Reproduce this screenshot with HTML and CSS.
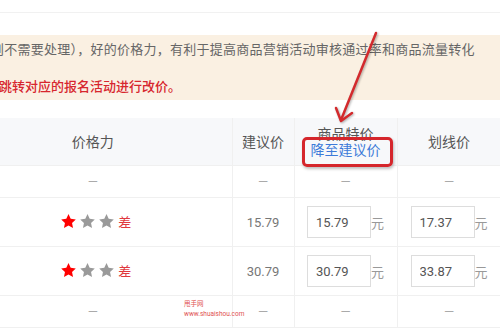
FILE: index.html
```html
<!DOCTYPE html>
<html lang="zh">

<head>
    <meta charset="UTF-8">
    <meta name="viewport" content="width=device-width, initial-scale=1.0">
    <title>价格力</title>
    <link rel="stylesheet" href="styles.css">
</head>

<body>
    <div class="page">
        <div class="topbar"></div>

        <div class="notice">
            <p class="noticeLine">则不需要处理），好的价格力，有利于提高商品营销活动审核通过率和商品流量转化</p>
            <p class="noticeLine noticeRed">跳转对应的报名活动进行改价。</p>
        </div>

        <table class="priceTable">
            <colgroup>
                <col class="colPower">
                <col class="colSuggest">
                <col class="colSpecial">
                <col class="colLine">
            </colgroup>
            <tr class="headRow">
                <th>价格力</th>
                <th>建议价</th>
                <th>
                    <div>商品特价</div>
                    <a class="lowerLink" href="#">降至建议价</a>
                </th>
                <th>划线价</th>
            </tr>
            <tr class="shortRow">
                <td><span class="dash">—</span></td>
                <td><span class="dash">—</span></td>
                <td><span class="dash">—</span></td>
                <td><span class="dash">—</span></td>
            </tr>
            <tr class="inputRow">
                <td>
                    <span class="stars">
                        <svg class="star on" viewBox="0 0 24 24"><path d="M12 1.5l3.1 6.6 7.2.9-5.3 5 1.4 7.1L12 17.6l-6.4 3.5L7 14l-5.3-5 7.2-.9z"/></svg>
                        <svg class="star" viewBox="0 0 24 24"><path d="M12 1.5l3.1 6.6 7.2.9-5.3 5 1.4 7.1L12 17.6l-6.4 3.5L7 14l-5.3-5 7.2-.9z"/></svg>
                        <svg class="star" viewBox="0 0 24 24"><path d="M12 1.5l3.1 6.6 7.2.9-5.3 5 1.4 7.1L12 17.6l-6.4 3.5L7 14l-5.3-5 7.2-.9z"/></svg>
                        <span class="grade">差</span>
                    </span>
                </td>
                <td class="suggest">15.79</td>
                <td><input class="priceInput" type="text" value="15.79"><span class="unit">元</span></td>
                <td><input class="priceInput" type="text" value="17.37"><span class="unit">元</span></td>
            </tr>
            <tr class="inputRow">
                <td>
                    <span class="stars">
                        <svg class="star on" viewBox="0 0 24 24"><path d="M12 1.5l3.1 6.6 7.2.9-5.3 5 1.4 7.1L12 17.6l-6.4 3.5L7 14l-5.3-5 7.2-.9z"/></svg>
                        <svg class="star" viewBox="0 0 24 24"><path d="M12 1.5l3.1 6.6 7.2.9-5.3 5 1.4 7.1L12 17.6l-6.4 3.5L7 14l-5.3-5 7.2-.9z"/></svg>
                        <svg class="star" viewBox="0 0 24 24"><path d="M12 1.5l3.1 6.6 7.2.9-5.3 5 1.4 7.1L12 17.6l-6.4 3.5L7 14l-5.3-5 7.2-.9z"/></svg>
                        <span class="grade">差</span>
                    </span>
                </td>
                <td class="suggest">30.79</td>
                <td><input class="priceInput" type="text" value="30.79"><span class="unit">元</span></td>
                <td><input class="priceInput" type="text" value="33.87"><span class="unit">元</span></td>
            </tr>
            <tr class="shortRow">
                <td><span class="dash">—</span></td>
                <td><span class="dash">—</span></td>
                <td><span class="dash">—</span></td>
                <td><span class="dash">—</span></td>
            </tr>
        </table>

        <!-- 标注 -->
        <div class="markBox"></div>
        <svg class="markArrow" width="500" height="334" viewBox="0 0 500 334">
            <path d="M376 33 L341 120" />
            <path d="M336 108 L341 121 L352 113" />
        </svg>
        <div class="watermark">
            甩手网<br>www.shuaishou.com
        </div>
    </div>
</body>

</html>
```

FILE: styles.css
```css
body {
    margin: 0px;
    padding: 0px;
    overflow: hidden;
    background-color: #fff;
    font-family: Roboto, "Noto Sans CJK SC", sans-serif;
}

.page {
    position: relative;
    width: 500px;
    height: 334px;
    overflow: hidden;
}

.topbar {
    height: 12px;
    border-bottom: 1px solid #f1f1f1;
}

.notice {
    margin-top: 22px;
    height: 65px;
    padding-top: 6px;
    box-sizing: border-box;
    background-color: #faf0e2;
}

.noticeLine {
    margin: 0px 0px 0px -9px;
    font-size: 13px;
    line-height: 18px;
    letter-spacing: 0.25px;
    color: #666;
    white-space: nowrap;
}

.noticeRed {
    margin-top: 19px;
    margin-left: -1px;
    letter-spacing: 0px;
    color: #d7262e;
    font-weight: 500;
}

.priceTable {
    margin: 18px 0px 0px -46px;
    border-collapse: collapse;
    table-layout: fixed;
    width: 547px;
    font-size: 13px;
    color: #666;
}

.colPower {
    width: 278px;
}

.colSuggest {
    width: 62px;
}

.colSpecial {
    width: 103px;
}

.colLine {
    width: 104px;
}

.priceTable th,
.priceTable td {
    padding: 0px;
    text-align: center;
    border-bottom: 1px solid #f0f0f0;
    border-right: 1px solid #f0f0f0;
}

.priceTable th {
    height: 47px;
    background-color: #f7f8fa;
    font-weight: normal;
    font-size: 14px;
    line-height: 16px;
    color: #555;
}

.lowerLink {
    color: #3d7bd9;
    text-decoration: none;
}

.shortRow td {
    height: 31px;
}

.inputRow td {
    height: 48px;
}

.dash {
    color: #aaa;
    font-size: 13px;
}

.stars {
    display: inline-flex;
    align-items: center;
    gap: 2px;
    margin-left: 6px;
}

.star {
    display: block;
    width: 17px;
    height: 17px;
    fill: #9a9a9a;
}

.star.on {
    fill: #f00;
}

.grade {
    margin-left: 1px;
    color: #e0393e;
    font-size: 13px;
}

.suggest {
    color: #777;
}

.priceInput {
    width: 64px;
    height: 32px;
    box-sizing: border-box;
    border: 1px solid #ddd;
    padding: 0px 0px 0px 8px;
    font-family: Roboto, sans-serif;
    font-size: 13px;
    color: #555;
    vertical-align: middle;
}

.unit {
    display: inline-block;
    width: 13px;
    font-size: 13px;
    color: #999;
    vertical-align: middle;
    text-align: right;
}

.markBox {
    position: absolute;
    left: 302px;
    top: 137px;
    width: 91px;
    height: 30px;
    box-sizing: border-box;
    border: 3px solid #d5262c;
    border-radius: 5px;
    box-shadow: 1px 2px 3px rgba(0, 0, 0, 0.25);
}

.markArrow {
    position: absolute;
    left: 0px;
    top: 0px;
    fill: none;
    stroke: #d32a2d;
    stroke-width: 2.5;
    stroke-linecap: round;
    stroke-linejoin: round;
    filter: drop-shadow(1px 1px 1px rgba(0, 0, 0, 0.3));
}

.watermark {
    position: absolute;
    left: 184px;
    top: 299px;
    font-size: 6.5px;
    line-height: 10px;
    color: #e05050;
}
```
